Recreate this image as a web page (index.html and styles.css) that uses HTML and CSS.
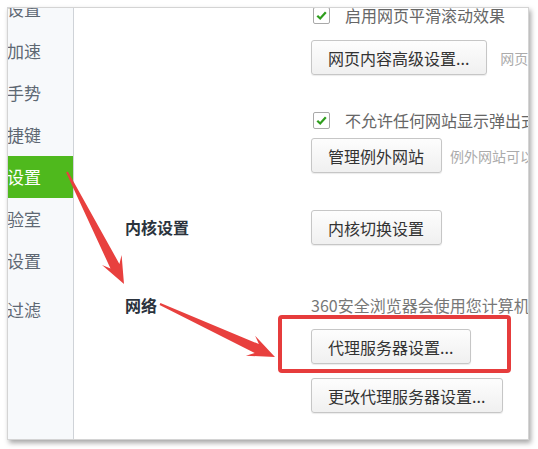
FILE: index.html
```html
<!DOCTYPE html>
<html lang="zh-CN">
<head>
  <meta charset="UTF-8" />
  <title>选项设置</title>
  <link rel="stylesheet" href="styles.css">
</head>
<body>

  <div class="window">
    <ul class="sidebar">
      <li>设置</li>
      <li>加速</li>
      <li>手势</li>
      <li>捷键</li>
      <li class="active">设置</li>
      <li>验室</li>
      <li>设置</li>
      <li class="last">过滤</li>
    </ul>

    <div class="content">
      <div class="section">
        <div class="section-label"></div>
        <div class="section-body">
          <label class="check first"><span class="box"><svg viewBox="0 0 16 16"><path d="M3.5 8.2 L6.6 11.2 L12.6 4.6" /></svg></span>启用网页平滑滚动效果</label>
          <div class="btn-line gap-15"><button>网页内容高级设置...</button><span class="hint">网页内容设置可以控制</span></div>
          <label class="check gap-35"><span class="box"><svg viewBox="0 0 16 16"><path d="M3.5 8.2 L6.6 11.2 L12.6 4.6" /></svg></span>不允许任何网站显示弹出式窗口</label>
          <div class="btn-line gap-8"><button>管理例外网站</button><span class="hint near">例外网站可以显示弹出窗口</span></div>
        </div>
      </div>

      <div class="section gap-37">
        <div class="section-label">内核设置</div>
        <div class="section-body">
          <div class="btn-line"><button>内核切换设置</button></div>
        </div>
      </div>

      <div class="section gap-50">
        <div class="section-label short">网络</div>
        <div class="section-body">
          <p class="note">360安全浏览器会使用您计算机的系统代理设置连接网络</p>
          <div class="btn-line gap-14"><button>代理服务器设置...</button></div>
          <div class="btn-line gap-14"><button>更改代理服务器设置...</button></div>
        </div>
      </div>
    </div>
  </div>

  <!-- annotation layer: arrows and highlight box -->
  <svg class="marks" viewBox="0 0 538 449" width="538" height="449">
    <polygon points="67.9,171.5 119.4,263.9 121.6,254.9 124,284 102,264.9 110.5,268.5 66.1,172.5" />
    <polygon points="160.4,303.1 258.9,344.1 255.1,335.7 275,357 245.9,355.7 254.7,353.1 159.6,304.9" />
    <rect x="280" y="317" width="229" height="54" rx="2" />
  </svg>

</body>
</html>
```

FILE: styles.css
```css
* {
  margin: 0;
  padding: 0;
  box-sizing: border-box;
}

body {
  width: 538px;
  height: 449px;
  background: #ffffff;
  font-family: "Noto Sans CJK SC", "Noto Sans", sans-serif;
  color: #333333;
  position: relative;
  overflow: hidden;
}

.window {
  margin: 7px 0 0 7px;
  width: 522px;
  height: 433px;
  background: #ffffff;
  border: 1px solid #d4d4d4;
  box-shadow: 2px 3px 5px rgba(0, 0, 0, 0.35);
  display: flex;
  overflow: hidden;
}

/* left menu */
.sidebar {
  list-style: none;
  width: 66px;
  flex-shrink: 0;
  background: #f7f9fb;
  border-right: 1px solid #cfd3d8;
  overflow: hidden;
}

.sidebar li {
  height: 42px;
  line-height: 42px;
  font-size: 17px;
  color: #5e6873;
  text-indent: -1px;
  white-space: nowrap;
}

.sidebar li:first-child {
  margin-top: -20px;
}

.sidebar li.active {
  background: #4fb91d;
  color: #ffffff;
}

.sidebar li.last {
  margin-top: 7px;
}

/* right panel */
.content {
  flex: 1;
  min-width: 0;
  padding-left: 51px;
  white-space: nowrap;
}

.section {
  display: flex;
}

.section-label {
  width: 186px;
  flex-shrink: 0;
  font-size: 16px;
  font-weight: bold;
  color: #2b333d;
  line-height: 35px;
}

.section-label.short {
  line-height: 20px;
}

.section-body {
  flex: 1;
  min-width: 0;
}

.check {
  display: flex;
  align-items: center;
  height: 20px;
  font-size: 16px;
  color: #666666;
}

.check.first {
  margin-top: -3px;
}

.box {
  width: 17px;
  height: 17px;
  margin: 0 15px 0 2px;
  border: 1px solid #a9a9a9;
  border-radius: 2px;
  background: #ffffff;
  display: flex;
  align-items: center;
  justify-content: center;
  flex-shrink: 0;
}

.box svg {
  width: 15px;
  height: 15px;
  fill: none;
  stroke: #2f9e1d;
  stroke-width: 2.4;
}

.btn-line {
  display: flex;
  align-items: center;
}

button {
  height: 35px;
  padding: 0 17px 0 16px;
  font-family: inherit;
  font-size: 16px;
  color: #333333;
  background: linear-gradient(#fdfdfd, #f0f0f0);
  border: 1px solid #c6c6c6;
  border-radius: 3px;
  box-shadow: 0 1px 1px rgba(0, 0, 0, 0.08);
}

.hint {
  margin-left: 13px;
  font-size: 14px;
  color: #ababab;
}

.hint.near {
  margin-left: 8px;
}

.note {
  height: 20px;
  line-height: 20px;
  font-size: 16px;
  color: #777777;
}

.gap-8 { margin-top: 8px; }
.gap-14 { margin-top: 14px; }
.gap-15 { margin-top: 15px; }
.gap-35 { margin-top: 35px; }
.gap-37 { margin-top: 37px; }
.gap-50 { margin-top: 50px; }

/* annotations */
.marks {
  position: absolute;
  left: 0;
  top: 0;
  pointer-events: none;
}

.marks polygon {
  fill: #e8403e;
}

.marks rect {
  fill: none;
  stroke: #e63c3c;
  stroke-width: 4;
}
```
